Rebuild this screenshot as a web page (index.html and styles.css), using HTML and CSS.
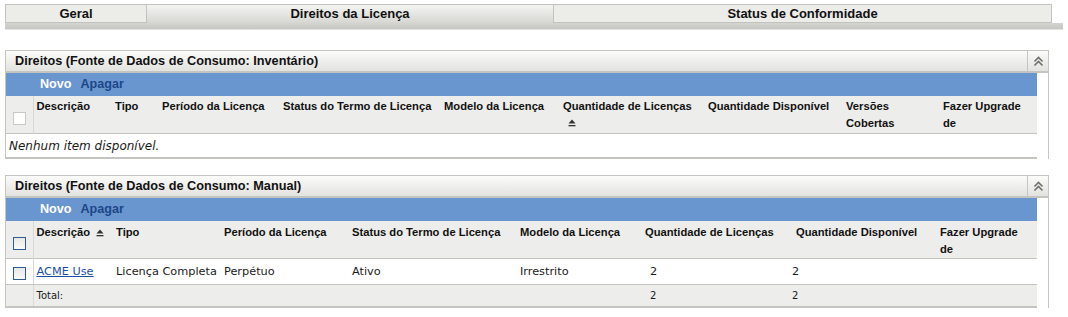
FILE: index.html
```html
<!DOCTYPE html>
<html lang="pt">
<head>
    <meta charset="UTF-8">
    <title>Direitos da Licença</title>
    <link rel="stylesheet" href="styles.css">
</head>
<body>
    <!-- Abas -->
    <div class="tabs">
        <div class="tab tab-geral">Geral</div>
        <div class="tab tab-direitos active">Direitos da Licença</div>
        <div class="tab tab-status">Status de Conformidade</div>
    </div>
    <div class="tab-strip"></div>

    <!-- Painel inventário -->
    <div class="panel">
        <div class="panel-title">
            <span class="panel-label">Direitos (Fonte de Dados de Consumo: Inventário)</span>
            <span class="collapse">
                <svg width="11" height="11" viewBox="0 0 11 11"><path d="M1.5 5.5 L5.5 1.5 L9.5 5.5 M1.5 9.5 L5.5 5.5 L9.5 9.5" fill="none" stroke="#6f6f6f" stroke-width="1.6"/></svg>
            </span>
        </div>
        <div class="panel-body">
            <div class="toolbar"><span class="novo">Novo</span><span class="apagar">Apagar</span></div>
            <table class="grid grid-inv">
                <colgroup>
                    <col style="width:27px"><col style="width:79px"><col style="width:47px"><col style="width:121px"><col style="width:161px"><col style="width:119px"><col style="width:145px"><col style="width:138px"><col style="width:97px"><col>
                </colgroup>
                <tr class="head">
                    <th class="chk"><span class="box disabled"></span></th>
                    <th>Descrição</th>
                    <th>Tipo</th>
                    <th>Período da Licença</th>
                    <th>Status do Termo de Licença</th>
                    <th>Modelo da Licença</th>
                    <th>Quantidade de Licenças<br><span class="sort sort-under"><svg width="8" height="8" viewBox="0 0 8 8"><path d="M4 0.5 L7.5 4.5 L0.5 4.5 Z" fill="#333"/><rect x="0.5" y="6" width="7" height="1.3" fill="#333"/></svg></span></th>
                    <th>Quantidade Disponível</th>
                    <th>Versões<br>Cobertas</th>
                    <th>Fazer Upgrade<br>de</th>
                </tr>
                <tr class="empty">
                    <td colspan="10">Nenhum item disponível.</td>
                </tr>
            </table>
        </div>
    </div>

    <!-- Painel manual -->
    <div class="panel panel-manual">
        <div class="panel-title">
            <span class="panel-label">Direitos (Fonte de Dados de Consumo: Manual)</span>
            <span class="collapse">
                <svg width="11" height="11" viewBox="0 0 11 11"><path d="M1.5 5.5 L5.5 1.5 L9.5 5.5 M1.5 9.5 L5.5 5.5 L9.5 9.5" fill="none" stroke="#6f6f6f" stroke-width="1.6"/></svg>
            </span>
        </div>
        <div class="panel-body">
            <div class="toolbar"><span class="novo">Novo</span><span class="apagar">Apagar</span></div>
            <table class="grid grid-man">
                <colgroup>
                    <col style="width:27px"><col style="width:80px"><col style="width:108px"><col style="width:128px"><col style="width:168px"><col style="width:125px"><col style="width:147px"><col style="width:148px"><col>
                </colgroup>
                <tr class="head">
                    <th class="chk"><span class="box"></span></th>
                    <th>Descrição <span class="sort"><svg width="8" height="8" viewBox="0 0 8 8"><path d="M4 0.5 L7.5 4.5 L0.5 4.5 Z" fill="#333"/><rect x="0.5" y="6" width="7" height="1.3" fill="#333"/></svg></span></th>
                    <th>Tipo</th>
                    <th>Período da Licença</th>
                    <th>Status do Termo de Licença</th>
                    <th>Modelo da Licença</th>
                    <th>Quantidade de Licenças</th>
                    <th class="disp">Quantidade Disponível</th>
                    <th>Fazer Upgrade<br>de</th>
                </tr>
                <tr class="row">
                    <td class="chk"><span class="box"></span></td>
                    <td><a href="#">ACME Use</a></td>
                    <td>Licença Completa</td>
                    <td>Perpétuo</td>
                    <td>Ativo</td>
                    <td>Irrestrito</td>
                    <td class="num">2</td>
                    <td>2</td>
                    <td></td>
                </tr>
                <tr class="total">
                    <td class="chk"></td>
                    <td>Total:</td>
                    <td></td>
                    <td></td>
                    <td></td>
                    <td></td>
                    <td class="num">2</td>
                    <td>2</td>
                    <td></td>
                </tr>
            </table>
        </div>
    </div>
</body>
</html>
```

FILE: styles.css
```css
/* Pagina */
body {
    margin: 0;
    padding: 4px 5px 0 5px;
    background-color: #ffffff;
    font-family: "DejaVu Sans", sans-serif;
    font-size: 11px;
    color: #1a1a1a;
}

/* Abas */
.tabs {
    display: flex;
    width: 1047px;
    height: 19px;
}
.tab {
    box-sizing: border-box;
    height: 19px;
    border: 1px solid #c2c2be;
    border-bottom: none;
    background: #ecece9;
    font-family: "Liberation Sans", Arial, sans-serif;
    font-weight: bold;
    font-size: 13px;
    line-height: 17px;
    text-align: center;
    color: #111;
}
.tab-geral { width: 142px; border-bottom: 1px solid #c2c2be; }
.tab-direitos { width: 406px; border-left: none; border-right: none; }
.tab-status { width: 499px; border-bottom: 1px solid #c2c2be; }
.tab.active {
    background: linear-gradient(#f4f4f2, #d6d6d2);
}
.tab-strip {
    width: 1058px;
    height: 6px;
    background: linear-gradient(#d4d4d0, #c6c6c2);
    border-bottom: 1px solid #e2e2e0;
}

/* Paineis */
.panel {
    width: 1042px;
    margin-top: 20px;
    border: 1px solid #c4c4c0;
    border-bottom: none;
    background: #ffffff;
}
.panel-manual {
    margin-top: 16px;
}
.panel-title {
    display: flex;
    height: 20px;
    background: linear-gradient(#fbfbfa, #e2e2df);
    border-bottom: 2px solid #c4c4c0;
}
.panel-label {
    flex: 1;
    padding-left: 9px;
    font-family: "Liberation Sans", Arial, sans-serif;
    font-weight: bold;
    font-size: 12.7px;
    line-height: 20px;
    color: #111;
}
.collapse {
    width: 20px;
    border-left: 1px solid #c4c4c0;
    display: flex;
    align-items: center;
    justify-content: center;
}
.panel-body {
    padding-right: 11px;
}

/* Barra azul */
.toolbar {
    height: 23px;
    background: #6a96cf;
    padding-left: 34px;
    font-family: "Liberation Sans", Arial, sans-serif;
    font-weight: bold;
    font-size: 12.6px;
    line-height: 22px;
}
.novo { color: #ffffff; margin-right: 9px; }
.apagar { color: #1d4688; }

/* Tabelas */
.grid {
    width: 1031px;
    border-collapse: collapse;
    table-layout: fixed;
    border-bottom: 2px solid #c4c4c0;
}
.grid th {
    background: #ededeb;
    text-align: left;
    vertical-align: top;
    font-family: "Liberation Sans", Arial, sans-serif;
    font-weight: bold;
    font-size: 11.2px;
    line-height: 17px;
    padding: 2px 3px 0 3px;
    color: #111;
    white-space: nowrap;
    overflow: hidden;
}
.grid-inv .head th { height: 35px; }
.grid-man .head th { height: 34px; padding-top: 3px; }
.grid .head { border-bottom: 1px solid #c4c4c0; }
.grid .chk {
    border-right: 1px solid #d8d8d4;
    padding: 0;
    vertical-align: middle;
    text-align: center;
}
.grid-man .head th.disp { padding-left: 7px; }

.box {
    display: inline-block;
    width: 11px;
    height: 11px;
    border: 1px solid #2f5c93;
    background: linear-gradient(#e8e8e6, #fafaf9);
    vertical-align: middle;
    margin-top: 3px;
}
.box.disabled {
    border-color: #c8c8c4;
    background: #ffffff;
    margin-top: 8px;
}

.sort { display: inline-block; vertical-align: middle; margin-left: 3px; }
.sort svg { display: block; }
.sort-under { margin-left: 5px; margin-top: -2px; }

.empty td {
    font-style: italic;
    font-size: 12px;
    padding: 0 3px;
    height: 23px;
    line-height: 22px;
}
.row td {
    height: 25px;
    padding: 0 3px;
    font-size: 11.3px;
    white-space: nowrap;
    border-bottom: 1px solid #c4c4c0;
}
.row td.num, .total td.num { padding-left: 8px; }
.row a {
    color: #1a4fa3;
    text-decoration: underline;
}
.total td {
    height: 21px;
    padding: 0 3px;
    font-size: 10px;
    background: #ededeb;
}
```
